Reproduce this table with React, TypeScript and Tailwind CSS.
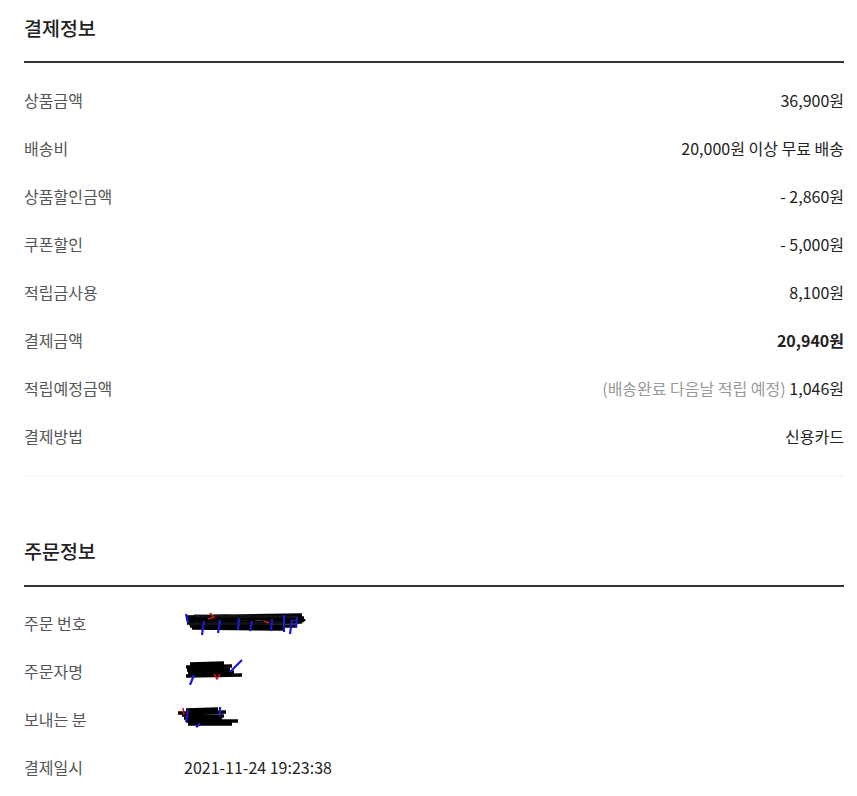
import React from 'react'

const font = { fontFamily: '"Noto Sans CJK KR", "Noto Sans", sans-serif' }

type Row = { label: string; value: React.ReactNode; bold?: boolean }

const payRows: Row[] = [
  { label: '상품금액', value: '36,900원' },
  { label: '배송비', value: '20,000원 이상 무료 배송' },
  { label: '상품할인금액', value: '- 2,860원' },
  { label: '쿠폰할인', value: '- 5,000원' },
  { label: '적립금사용', value: '8,100원' },
  { label: '결제금액', value: '20,940원', bold: true },
  {
    label: '적립예정금액',
    value: (
      <>
        <span className="text-[#999]">(배송완료 다음날 적립 예정)</span> 1,046원
      </>
    ),
  },
  { label: '결제방법', value: '신용카드' },
]

// redaction scribbles drawn over the hidden values
function Scribble({ w, h, kind }: { w: number; h: number; kind: 'long' | 'short' | 'blob' }) {
  if (kind === 'long') {
    return (
      <svg width={w} height={h} viewBox={`0 0 ${w} ${h}`}>
        <path d="M2 9 L118 7 M4 12 L120 10 M3 15 L118 14 M6 18 L112 18 M2 11 Q40 5 80 11 T120 11 M8 20 L100 21" stroke="#000" strokeWidth="3.5" fill="none" />
        <path d="M5 16 L100 15 M10 8 L115 9" stroke="#111" strokeWidth="3" fill="none" />
        <path d="M2 6 L4 15 M20 13 L18 27 M36 12 L34 25 M55 10 L54 22 M68 13 L66 23 M88 11 L87 23 M100 7 L100 24 M108 12 L106 26 M113 9 L112 20" stroke="#1a1ad8" strokeWidth="2.2" fill="none" />
        <path d="M26 5 L30 9 L24 11 M80 13 L85 15" stroke="#d01818" strokeWidth="1.6" fill="none" />
      </svg>
    )
  }
  if (kind === 'short') {
    return (
      <svg width={w} height={h} viewBox={`0 0 ${w} ${h}`}>
        <path d="M2 10 L48 9 M3 13 L46 12 M4 16 L50 15 M2 19 L58 18 M6 7 L40 6" stroke="#000" strokeWidth="3.5" fill="none" />
        <path d="M10 18 L6 28 M46 15 L58 3" stroke="#1a1ad8" strokeWidth="2.2" fill="none" />
        <path d="M30 17 L33 22 L36 17" stroke="#d01818" strokeWidth="1.6" fill="none" />
      </svg>
    )
  }
  return (
    <svg width={w} height={h} viewBox={`0 0 ${w} ${h}`}>
      <path d="M2 9 L50 8 M6 11 L48 12 M8 14 L46 14 M10 17 L62 17 M12 20 L56 20 M10 6 L42 5" stroke="#000" strokeWidth="3.5" fill="none" />
      <path d="M12 6 L10 18 M44 3 L44 12 M24 20 L20 23" stroke="#1a1ad8" strokeWidth="2.2" fill="none" />
      <path d="M7 4 L8 11" stroke="#d01818" strokeWidth="1.6" fill="none" />
    </svg>
  )
}

const orderRows: { label: string; value: React.ReactNode }[] = [
  { label: '주문 번호', value: <Scribble w={124} h={30} kind="long" /> },
  { label: '주문자명', value: <Scribble w={60} h={28} kind="short" /> },
  { label: '보내는 분', value: <span className="-ml-2 inline-block"><Scribble w={64} h={26} kind="blob" /></span> },
  { label: '결제일시', value: '2021-11-24 19:23:38' },
]

export default function App() {
  return (
    <div className="min-h-[796px] bg-white pl-6" style={font}>
      <div className="w-[820px]">
        <section>
          <div className="pt-[10px] pb-[15px]">
            <h2 className="text-[19.5px] leading-9 font-medium text-[#222]">결제정보</h2>
          </div>
          <div className="border-t-2 border-[#333] pt-[13px] pb-[15px] border-b-2 border-b-[#f6f6f6]">
            {payRows.map((row) => (
              <div key={row.label} className="flex h-12 items-center justify-between text-[16px]">
                <span className="text-[#555]">{row.label}</span>
                <span className={row.bold ? 'font-semibold text-[#222]' : 'text-[#222]'}>{row.value}</span>
              </div>
            ))}
          </div>
        </section>

        <section className="pt-[56px]">
          <div className="pb-[16px]">
            <h2 className="text-[19.5px] leading-9 font-medium text-[#222]">주문정보</h2>
          </div>
          <div className="border-t-2 border-[#333] pt-[12px]">
            {orderRows.map((row) => (
              <div key={row.label} className="flex h-12 items-center text-[16px]">
                <span className="w-[160px] text-[#555]">{row.label}</span>
                <span className="text-[#222]">{row.value}</span>
              </div>
            ))}
          </div>
        </section>
      </div>
    </div>
  )
}
